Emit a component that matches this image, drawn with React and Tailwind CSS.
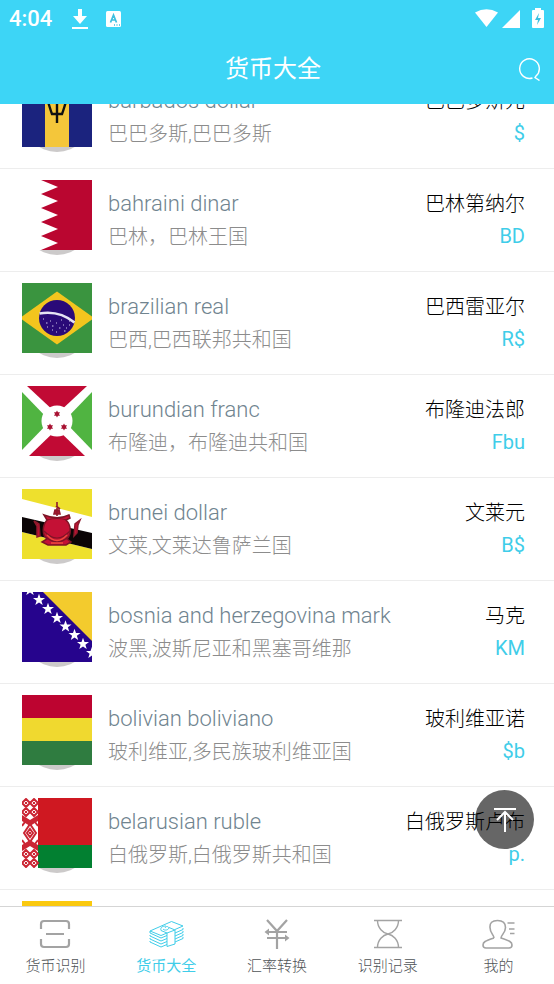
import React, { useLayoutEffect, useRef } from 'react';

/** Puntos de una estrella de cinco puntas */
const estrella = (cx, cy, r) =>
  Array.from({ length: 10 }, (_, i) => {
    const radio = i % 2 ? r * 0.4 : r;
    const a = (Math.PI / 5) * i - Math.PI / 2;
    return `${(cx + radio * Math.cos(a)).toFixed(1)},${(cy + radio * Math.sin(a)).toFixed(1)}`;
  }).join(' ');

const Barbados = () => (
  <>
    <rect width="70" height="70" fill="#1b237e" />
    <rect x="23" width="24" height="70" fill="#f4c63a" />
    <path d="M25 22C27 27 28 32 30 37H40C42 32 43 27 45 22M35 20V46" fill="none" stroke="#111" strokeWidth="2.4" />
  </>
);

const Bahrain = () => (
  <>
    <rect width="70" height="70" fill="#fff" />
    <path d="M19 0H70V70H19L36 63 19 56 36 49 19 42 36 35 19 28 36 21 19 14 36 7Z" fill="#ba0630" />
  </>
);

const Brasil = () => (
  <>
    <rect width="70" height="70" fill="#3a943f" />
    <path d="M35 8.500L72 35 35 61.500-2 35Z" fill="#f3c51e" />
    <circle cx="35" cy="35" r="18" fill="#2a0a78" />
    <path d="M17.500 30.500Q37 27 52.500 39.500" fill="none" stroke="#e6e4f4" strokeWidth="2.600" />
    <path d="M21 36h1M24 40h1.500M28 38h1M25 44h1M30 43h1.500M34 40h1M37 45h1.500M34 49h1M41 42h1M44 45h1M42 48h1.500M47 42h1M39 37h1M30 47h1M47 38h1" stroke="#cfc8ea" strokeWidth="1.100" />
  </>
);

const Burundi = () => (
  <>
    <rect width="70" height="70" fill="#fff" />
    <path d="M5 0H65L35 28Z" fill="#c10a34" />
    <path d="M7 70H63L35 43Z" fill="#c10a34" />
    <path d="M0 6L28 35 0 64Z" fill="#50b441" />
    <path d="M70 6L42 35 70 64Z" fill="#50b441" />
    <circle cx="35" cy="35" r="15.500" fill="#fff" />
    {[[35, 28], [28, 41], [42, 41]].map(([x, y]) => (
      <path
        key={`${x}-${y}`}
        transform={`translate(${x} ${y})`}
        d="M0-3.500L1-1.700 3-1.700 2 0 3 1.700 1 1.700 0 3.500-1 1.700-3 1.700-2 0-3-1.700-1-1.700Z"
        fill="#a81232"
      />
    ))}
  </>
);

const Brunei = () => (
  <>
    <rect width="70" height="70" fill="#eee02d" />
    <path d="M0 10L70 28V60L0 43Z" fill="#fff" />
    <path d="M0 28L70 44V60L0 43Z" fill="#0b0506" />
    <path d="M22 26C32 30 39 30 47 26L48 29 44 31C50 37 49 46 45 50L49 53 44 56H26L20 53 25 50C20 46 20 37 25 31Z" fill="#c41135" stroke="#7d1526" strokeWidth="1.500" />
    <path d="M25 31Q35 28 45 31M22 42Q35 56 48 42M24 48Q35 58 46 48" fill="none" stroke="#7d1526" strokeWidth="1.200" />
    <path d="M25 46Q35 57 45 46M29 54H41" fill="none" stroke="#ee4b3e" strokeWidth="1.300" />
    <path d="M35 27V13M32 25H38L37 21H33ZM34 17L38 20" fill="#b51631" stroke="#8e1a2c" strokeWidth="1.600" />
    <path d="M12 32L17 35 18 47 15 48 15 37ZM58 31L53 35 52 47 55 44 56 36Z" fill="#c41135" stroke="#8e1a2c" strokeWidth="1.500" />
  </>
);

const Bosnia = () => (
  <>
    <rect width="70" height="70" fill="#26048d" />
    <path d="M21 0H70V49Z" fill="#f3cb2d" />
    {[[8, -2], [17, 8], [26, 17], [35, 26], [43.5, 34.5], [52.5, 43], [61, 52], [70, 61]].map(([x, y]) => (
      <polygon key={x} points={estrella(x, y, 6.3)} fill="#fff" />
    ))}
  </>
);

const Bolivia = () => (
  <>
    <rect width="70" height="70" fill="#bd0430" />
    <rect y="23" width="70" height="47" fill="#f0d92f" />
    <rect y="46" width="70" height="24" fill="#2f7c40" />
  </>
);

const Belarus = () => (
  <>
    <rect width="70" height="70" fill="#cf1821" />
    <rect y="47" width="70" height="23" fill="#028031" />
    <rect width="16" height="70" fill="#fff" />
    <g fill="none" stroke="#cb2533" strokeWidth="2">
      <path d="M4 1L8 5 4 9 0 5ZM12 1L16 5 12 9 8 5ZM4 10L8 14 4 18 0 14ZM12 10L16 14 12 18 8 14Z" />
      <path d="M8 26L14 35 8 44 2 35ZM8 31L11 35 8 39 5 35ZM0 28L3 24M16 28L13 24M0 42L3 46M16 42L13 46" />
      <path d="M4 52L8 56 4 60 0 56ZM12 52L16 56 12 60 8 56ZM4 61L8 65 4 69 0 65ZM12 61L16 65 12 69 8 65Z" />
    </g>
    <path d="M0 17L8 22 16 17V23L8 28 0 23ZM0 53L8 48 16 53V47L8 42 0 47ZM3 4h2v2H3ZM11 4h2v2h-2ZM3 13h2v2H3ZM11 13h2v2h-2ZM3 55h2v2H3ZM11 55h2v2h-2ZM3 64h2v2H3ZM11 64h2v2h-2ZM7 34h2v2H7Z" fill="#cb2533" />
  </>
);

const Belgica = () => <rect width="70" height="70" fill="#fac90f" />;

const MONEDAS = [
  { name: 'barbados dollar', region: '巴巴多斯,巴巴多斯', moneda: '巴巴多斯元', simbolo: '$', Flag: Barbados },
  { name: 'bahraini dinar', region: '巴林，巴林王国', moneda: '巴林第纳尔', simbolo: 'BD', Flag: Bahrain },
  { name: 'brazilian real', region: '巴西,巴西联邦共和国', moneda: '巴西雷亚尔', simbolo: 'R$', Flag: Brasil },
  { name: 'burundian franc', region: '布隆迪，布隆迪共和国', moneda: '布隆迪法郎', simbolo: 'Fbu', Flag: Burundi },
  { name: 'brunei dollar', region: '文莱,文莱达鲁萨兰国', moneda: '文莱元', simbolo: 'B$', Flag: Brunei },
  { name: 'bosnia and herzegovina mark', region: '波黑,波斯尼亚和黑塞哥维那', moneda: '马克', simbolo: 'KM', Flag: Bosnia },
  { name: 'bolivian boliviano', region: '玻利维亚,多民族玻利维亚国', moneda: '玻利维亚诺', simbolo: '$b', Flag: Bolivia },
  { name: 'belarusian ruble', region: '白俄罗斯,白俄罗斯共和国', moneda: '白俄罗斯卢布', simbolo: 'p.', Flag: Belarus },
  { name: '', region: '', moneda: '', simbolo: '', Flag: Belgica },
];

const IconoEscanear = () => (
  <path d="M5 14V9Q5 6 8 6H30Q33 6 33 9V14M5 24V29Q5 32 8 32H30Q33 32 33 29V24M10 19H28" strokeWidth="2.200" />
);

const IconoBilletes = () => (
  <path
    d="M20 18L14 20.500 3 16 24.500 6.500 36 11 28 14.500M3 16V18L14 23 20 20.500M3 20V21L14 26 20 23.500M3 23V24L14 29 20 26.500M3 26V27L14 32 20 29.500M20 18L28 15V29L20 31.500ZM20 18L14 15.500M28 15L22 12.500M14 15.500C13 12 16 11 19 11M16 14C18 16 21 15 22 13 21 11 19 11 18 13M28 18L36 14.500V13M28 21L36 17.500V16M28 24L36 20.500V19M28 27L36 23.500V22"
    strokeWidth="1"
  />
);

const IconoCambio = () => (
  <>
    <path d="M9 5L19 16 29 5M19 16V34M8 17H29M9 23H30" strokeWidth="2.200" />
    <path d="M11 13.500V20.500L6.500 17ZM27 19.500V26.500L31.500 23Z" fill="currentColor" stroke="none" />
  </>
);

const IconoReloj = () => (
  <path d="M5 5.500H33M5 32.500H33M8.500 5.500C8.500 13 14 18 19 19 24 18 29.500 13 29.500 5.500M8.500 32.500C8.500 25 14 20 19 19 24 20 29.500 25 29.500 32.500" strokeWidth="1.400" />
);

const IconoPerfil = () => (
  <path
    d="M14 23C5 26 3 27 3 30Q3 33 6 33H29Q32 33 32 30C32 27 30 26 21 23C21 20 25.500 18 25.500 12.500Q25.500 5.500 17.500 5.500T10 12.500C10 18 14 20 14 23M27.500 8H34.500M29 14H34.500M30 18.500H34.500"
    strokeWidth="1.600"
  />
);

const NAV_ITEMS = [
  { label: '货币识别', Icono: IconoEscanear },
  { label: '货币大全', Icono: IconoBilletes, activo: true },
  { label: '汇率转换', Icono: IconoCambio },
  { label: '识别记录', Icono: IconoReloj },
  { label: '我的', Icono: IconoPerfil },
];

const FilaMoneda = ({ name, region, moneda, simbolo, Flag }) => (
  <li className="flex h-[103px] items-start border-b border-[#ededed] pt-[11px] pr-[29px] pl-[22px]">
    {/* Bandera sobre el disco gris */}
    <div className="relative mr-4 h-[75px] w-[70px] shrink-0">
      <span className="absolute inset-x-0 bottom-0 h-[70px] rounded-full bg-[#cccaca]" />
      <svg viewBox="0 0 70 70" preserveAspectRatio="none" className="relative h-[70px] w-[70px]" aria-hidden="true">
        <Flag />
      </svg>
    </div>
    <div className="flex min-w-0 flex-1 flex-col gap-[7px] pt-3 leading-6 font-light whitespace-nowrap">
      <p className="text-[22px] text-[#70848f]">{name}</p>
      <p className="text-xl text-[#8c8c8c]">{region}</p>
    </div>
    <div className="flex shrink-0 flex-col gap-2 pt-3 text-right text-xl leading-6 whitespace-nowrap">
      <p className="font-light text-black">{moneda}</p>
      <p className="text-[#3fcde9]">{simbolo}</p>
    </div>
  </li>
);

const App = () => {
  const listaRef = useRef(null);

  useLayoutEffect(() => {
    listaRef.current.scrollTop = 38;
  }, []);

  return (
    <div className="relative flex h-screen flex-col overflow-hidden bg-white font-[Roboto,'Noto_Sans_CJK_SC',sans-serif]">
      <header className="shrink-0 bg-[#3dd5f6] text-white">
        {/* Barra de estado */}
        <div className="flex h-[38px] items-center pr-2 pl-[9px]">
          <span className="text-[22px] leading-9 font-medium">4:04</span>
          <svg viewBox="0 0 16 22" className="ml-5 h-[22px] w-4" fill="currentColor" aria-hidden="true">
            <path d="M6 1h4v7h5L8 16 1 8h5ZM0 19h16v2H0Z" />
          </svg>
          <svg viewBox="0 0 16 16" className="ml-[18px] h-4 w-4" aria-hidden="true">
            <rect width="15" height="16" rx="1.500" fill="#fff" />
            <path d="M4.500 11.500L7.500 4 10.500 11.500M5.500 9H9.500M8 14h1M10.500 14h1M13 14h1" fill="none" stroke="#3dbfdf" strokeWidth="1.700" />
          </svg>
          <svg viewBox="0 0 72 22" className="ml-auto h-[22px] w-[72px]" aria-hidden="true">
            <path d="M1 4.500Q12.500-2 24 4.500L12.500 19Z" fill="#fff" />
            <path d="M28 20L46 2V20Z" fill="#fff" />
            <path d="M61 0H67V2H69Q70 2 70 3V19Q70 20 69 20H59Q58 20 58 19V3Q58 2 59 2H61Z" fill="#fff" />
            <path d="M65 5L61 12H64L63 17 67 10H64Z" fill="#3dbfdf" />
          </svg>
        </div>
        <div className="grid h-[66px] grid-cols-[1fr_auto_1fr] items-center pr-3 pb-1 pl-1">
          <h1 className="col-start-2 text-2xl">货币大全</h1>
          <button type="button" aria-label="搜索" className="justify-self-end">
            <svg viewBox="0 0 24 24" className="h-6 w-6" fill="none" stroke="#fff" strokeWidth="1.400">
              <path d="M14.500 21A9.800 9.800 0 1 1 18 19L17 20.500 21.500 23.500" />
            </svg>
          </button>
        </div>
      </header>

      <main ref={listaRef} className="min-h-0 flex-1 overflow-y-auto [scrollbar-width:none]">
        <ul>
          {MONEDAS.map((m) => (
            <FilaMoneda key={m.simbolo} {...m} />
          ))}
        </ul>
      </main>

      <button
        type="button"
        aria-label="回到顶部"
        onClick={() => listaRef.current.scrollTo({ top: 0, behavior: 'smooth' })}
        className="absolute right-5 bottom-[135px] flex h-[59px] w-[59px] items-center justify-center rounded-full bg-black/60"
      >
        <svg viewBox="0 0 24 24" className="h-6 w-6" fill="none" stroke="#fff" strokeWidth="2">
          <path d="M1 1H23M12 24V4M4 12L12 4 20 12" />
        </svg>
      </button>

      <nav className="grid h-[78px] shrink-0 grid-cols-5 border-t border-[#d5d5d5] bg-white">
        {NAV_ITEMS.map(({ label, Icono, activo }) => (
          <a
            key={label}
            href="#"
            className={`flex flex-col items-center pt-2 text-[15px] leading-5 ${activo ? 'text-[#3fcde9]' : 'font-light text-[#505457]'}`}
          >
            <svg viewBox="0 0 38 38" className={`h-[38px] w-[38px] ${activo ? '' : 'text-[#a3a3a3]'}`} fill="none" stroke="currentColor" aria-hidden="true">
              <Icono />
            </svg>
            <span className="mt-[3px]">{label}</span>
          </a>
        ))}
      </nav>
    </div>
  );
};

export default App;
